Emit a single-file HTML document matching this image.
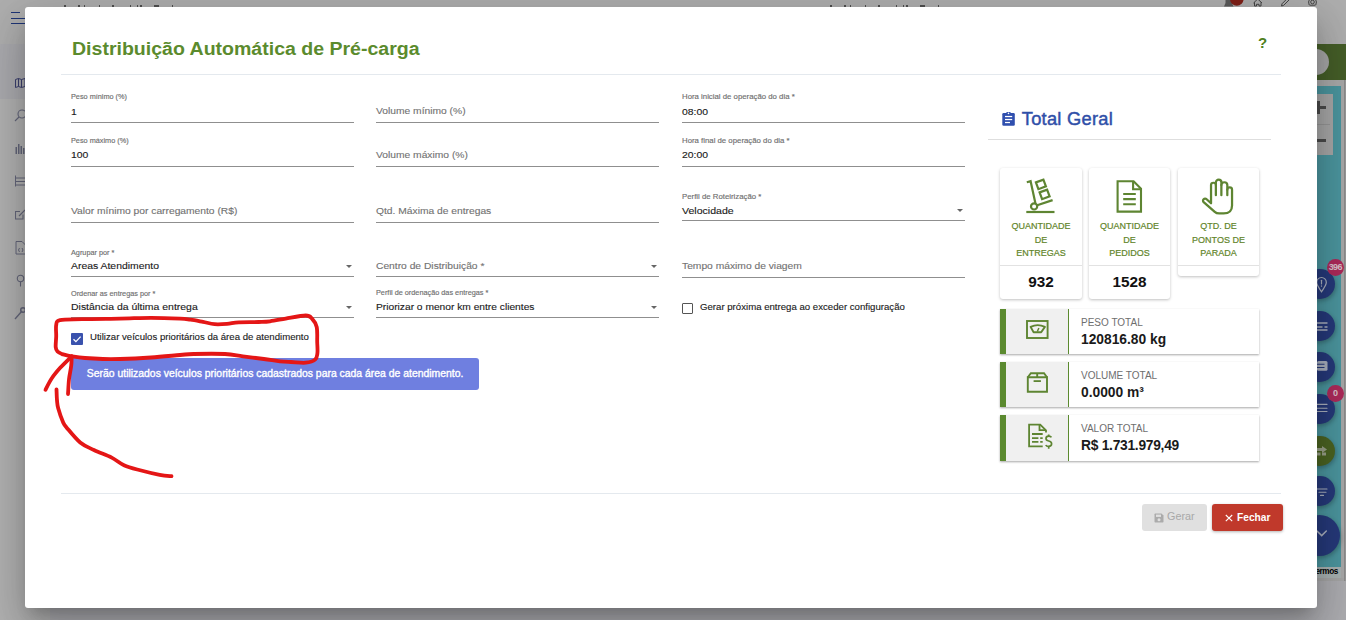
<!DOCTYPE html>
<html><head><meta charset="utf-8"><title>Distribuição Automática de Pré-carga</title>
<style>
html,body{margin:0;padding:0;width:1346px;height:620px;overflow:hidden;background:#a5a5a5;font-family:"Liberation Sans",sans-serif;}
.t{position:absolute;white-space:nowrap;line-height:1;-webkit-font-smoothing:antialiased;}
.r{position:absolute;}
</style></head><body>
<div class="r" style="left:0px;top:0px;width:1346px;height:44px;background:#aeaeae;"></div>
<div class="r" style="left:0px;top:44px;width:50px;height:576px;background:#b1b1b1;"></div>
<div class="r" style="left:0px;top:44px;width:50px;height:55px;background:#aaaaae;"></div>
<div class="r" style="left:50px;top:44px;width:1296px;height:576px;background:#acacb0;"></div>
<div class="r" style="left:11px;top:12px;width:9px;height:1px;background:#1f3577;"></div>
<div class="r" style="left:11px;top:18px;width:15px;height:1px;background:#1f3577;"></div>
<div class="r" style="left:11px;top:23px;width:15px;height:1px;background:#1f3577;"></div>
<div class="r" style="left:1300px;top:44px;width:46px;height:36px;background:#455e28;"></div>
<div class="r" style="left:1302px;top:48.5px;width:26.5px;height:26.5px;border-radius:50%;background:#a6a6a6"></div>
<div class="r" style="left:1300px;top:80px;width:46px;height:6px;background:#a9a9a9;"></div>
<div class="r" style="left:1300px;top:86px;width:41px;height:481px;background:#4b959e;"></div>
<div class="r" style="left:1341px;top:80px;width:5px;height:501.3px;background:#9a9a9a;"></div>
<div class="r" style="left:1341px;top:80px;width:2.7px;height:501.3px;background:#a8a8a8;"></div>
<div class="r" style="left:1343.7px;top:80px;width:1px;height:501.3px;background:#8c8c8c;"></div>
<div class="r" style="left:1300px;top:567px;width:41px;height:11px;background:#a8b1b1;"></div>
<div class="r" style="left:1300px;top:578px;width:43.7px;height:3.3px;background:#a5a5a5;"></div>
<div class="r" style="left:1300px;top:94px;width:33px;height:61px;background:#a6a6a6;"></div>
<div class="r" style="left:1300px;top:124px;width:30px;height:1px;background:#959595;"></div>
<div class="r" style="left:1314px;top:106px;width:12px;height:3px;background:#4a4a4a;"></div>
<div class="r" style="left:1317px;top:101px;width:3px;height:13px;background:#4a4a4a;"></div>
<div class="r" style="left:1314px;top:139px;width:12px;height:3px;background:#4a4a4a;"></div>
<div class="r" style="left:1304.2px;top:269.0px;width:30.4px;height:30.4px;border-radius:50%;background:#26397a;box-shadow:1px 2px 4px rgba(0,0,0,0.25)"></div>
<div class="r" style="left:1304.2px;top:310.8px;width:30.4px;height:30.4px;border-radius:50%;background:#26397a;box-shadow:1px 2px 4px rgba(0,0,0,0.25)"></div>
<div class="r" style="left:1304.2px;top:351.7px;width:30.4px;height:30.4px;border-radius:50%;background:#26397a;box-shadow:1px 2px 4px rgba(0,0,0,0.25)"></div>
<div class="r" style="left:1304.2px;top:393.8px;width:30.4px;height:30.4px;border-radius:50%;background:#26397a;box-shadow:1px 2px 4px rgba(0,0,0,0.25)"></div>
<div class="r" style="left:1304.2px;top:435.6px;width:30.4px;height:30.4px;border-radius:50%;background:#4b6322;box-shadow:1px 2px 4px rgba(0,0,0,0.25)"></div>
<div class="r" style="left:1304.2px;top:475.8px;width:30.4px;height:30.4px;border-radius:50%;background:#26397a;box-shadow:1px 2px 4px rgba(0,0,0,0.25)"></div>
<div class="r" style="left:1298.8000000000002px;top:514.6px;width:41.2px;height:41.2px;border-radius:50%;background:#26397a;box-shadow:1px 2px 4px rgba(0,0,0,0.25)"></div>
<svg class="r" style="left:1300px;top:260px" width="46" height="330" viewBox="1300 260 46 330"><g fill="none" stroke="#a9afbd" stroke-width="1.2" stroke-linecap="round"><path d="M1321.5 277.5A4.8 4.8 0 0 1 1326.3 282.3C1326.3 285.5 1323.5 288.5 1321.5 291.8C1319.5 288.5 1316.7 285.5 1316.7 282.3A4.8 4.8 0 0 1 1321.5 277.5Z"/><path d="M1321.5 280.3V284"/><path d="M1321.5 285.8V286.2"/><path d="M1317 323H1327M1317 327H1322M1325 327H1327M1317 330H1327" stroke-width="1.4"/><path d="M1327 404.4H1317M1327 408.2H1317M1327 411.5H1317" stroke-width="1.1"/><path d="M1317 489H1327M1319 492.2H1326M1320.5 495.4H1323.5" stroke-width="1.1"/><path d="M1317 531L1321.7 535.6L1326.3 531" stroke-width="1.5"/></g><rect x="1317" y="361" width="10.5" height="9.8" rx="1.5" fill="#a9afbd"/><path d="M1317 364.3H1324.5M1317 367.5H1324.5" stroke="#26397a" stroke-width="1.1"/><g fill="#9aa08a"><rect x="1317" y="448" width="6" height="3"/><path d="M1322 446L1327 449.5L1322 453Z"/><rect x="1317" y="452.5" width="3.5" height="3"/><rect x="1322" y="452.5" width="4" height="3"/></g></svg>
<div class="r" style="left:1326.8999999999999px;top:258.8px;width:16.8px;height:16.8px;border-radius:50%;background:#ad2a5a;color:#d9c3cb;font:bold 9px/17px 'Liberation Sans',sans-serif;text-align:center;letter-spacing:-0.6px">396</div>
<div class="r" style="left:1326.8999999999999px;top:385.0px;width:16.8px;height:16.8px;border-radius:50%;background:#ad2a5a;color:#d9c3cb;font:bold 9px/17px 'Liberation Sans',sans-serif;text-align:center;letter-spacing:-0.6px">0</div>
<div class="t" style="left:1315.50px;top:568.06px;font-size:8.2px;color:#000;font-weight:700;letter-spacing:-0.45px;">ermos</div>
<svg class="r" style="left:1220px;top:0" width="100" height="8" viewBox="1220 0 100 8"><path d="M1224 6.5H1233.5L1232 3V-2H1225.5V3Z" fill="#5a5a5a"/><circle cx="1236.8" cy="-1" r="6.8" fill="#7f2018"/><g fill="none" stroke="#444" stroke-width="1"><path d="M1253.5 3L1257.7 -1L1262 3M1254.5 2.3V6H1256.5V4.3H1259V6H1261V2.3"/><path d="M1281.5 6L1282 3.8L1288 -2.2L1289.6 -0.6L1283.6 5.4Z"/><circle cx="1312.5" cy="2" r="1.8"/><path d="M1309.2 5L1308.6 2L1309.5 -0.8M1315.8 5L1316.4 2L1315.5 -0.8M1309.5 5.2H1315.5"/></g></svg>
<div class="r" style="left:63.7px;top:5px;width:2px;height:2px;background:#505050;"></div>
<div class="r" style="left:78px;top:5px;width:1.5px;height:2px;background:#505050;"></div>
<div class="r" style="left:83.8px;top:5px;width:1.4px;height:2px;background:#505050;"></div>
<div class="r" style="left:98.5px;top:5px;width:1px;height:2px;background:#505050;"></div>
<div class="r" style="left:112px;top:5px;width:2px;height:2px;background:#505050;"></div>
<div class="r" style="left:129.7px;top:5px;width:1.5px;height:2px;background:#505050;"></div>
<div class="r" style="left:137.1px;top:5px;width:1px;height:2px;background:#505050;"></div>
<div class="r" style="left:140.2px;top:5px;width:1.6px;height:2px;background:#505050;"></div>
<div class="r" style="left:153.5px;top:5px;width:5px;height:2px;background:#505050;"></div>
<div class="r" style="left:171.5px;top:5px;width:1px;height:2px;background:#505050;"></div>
<div class="r" style="left:829.7px;top:5px;width:2px;height:2px;background:#505050;"></div>
<div class="r" style="left:844px;top:5px;width:1.5px;height:2px;background:#505050;"></div>
<div class="r" style="left:849.8px;top:5px;width:1.4px;height:2px;background:#505050;"></div>
<div class="r" style="left:864.5px;top:5px;width:1px;height:2px;background:#505050;"></div>
<div class="r" style="left:878px;top:5px;width:2px;height:2px;background:#505050;"></div>
<div class="r" style="left:895.6px;top:5px;width:1.5px;height:2px;background:#505050;"></div>
<div class="r" style="left:903.1px;top:5px;width:1px;height:2px;background:#505050;"></div>
<div class="r" style="left:906.2px;top:5px;width:1.6px;height:2px;background:#505050;"></div>
<div class="r" style="left:919.5px;top:5px;width:5px;height:2px;background:#505050;"></div>
<div class="r" style="left:937.5px;top:5px;width:1px;height:2px;background:#505050;"></div>
<svg class="r" style="left:15px;top:78px" width="11" height="10" viewBox="0 0 11 10"><g fill="none" stroke="#3b3f6e" stroke-width="1"><path d="M0.5 1.5L3.5 0.5L6.5 1.5L10 0.5V8.5L6.5 9.5L3.5 8.5L0.5 9.5Z M3.5 0.5V8.5M6.5 1.5V9.5"/></g></svg>
<svg class="r" style="left:14px;top:109px" width="12" height="13" viewBox="0 0 12 13"><g fill="none" stroke="#64667a" stroke-width="1.1"><circle cx="8" cy="5" r="4"/><path d="M5 8L1 12"/></g></svg>
<svg class="r" style="left:15px;top:142px" width="11" height="13" viewBox="0 0 11 13"><g fill="#64667a"><rect x="0.5" y="5" width="1.5" height="7"/><rect x="3" y="2" width="1.5" height="10"/><rect x="5.5" y="4" width="1.5" height="8"/><rect x="8" y="6" width="1.5" height="6"/></g></svg>
<svg class="r" style="left:15px;top:175px" width="11" height="12" viewBox="0 0 11 12"><g fill="none" stroke="#64667a" stroke-width="1"><path d="M0.5 0.5V11.5M0.5 3H10.5M0.5 6.5H10.5M0.5 10H10.5"/></g></svg>
<svg class="r" style="left:15px;top:208px" width="11" height="12" viewBox="0 0 11 12"><g fill="none" stroke="#64667a" stroke-width="1.1"><path d="M8 6.5V11H0.5V3.5H5"/><path d="M4 8L10 2"/></g></svg>
<svg class="r" style="left:15px;top:241px" width="11" height="14" viewBox="0 0 11 14"><g fill="none" stroke="#64667a" stroke-width="1"><path d="M1 0.5H7L10.5 4V13H1Z"/><path d="M4.5 7L3.5 9L4.5 11M7 7L8 9L7 11"/></g></svg>
<svg class="r" style="left:15px;top:274px" width="11" height="13" viewBox="0 0 11 13"><g fill="none" stroke="#64667a" stroke-width="1.1"><circle cx="5.5" cy="4.5" r="3.2"/><path d="M5.5 7.7V12.5"/></g></svg>
<svg class="r" style="left:14px;top:306px" width="12" height="14" viewBox="0 0 12 14"><g fill="none" stroke="#64667a" stroke-width="1.4"><path d="M1 13L8 5"/><circle cx="9" cy="4" r="2.3"/></g></svg>
<div class="r" style="left:25px;top:7px;width:1292px;height:601px;background:#fff;border-radius:3px;box-shadow:0 11px 15px -7px rgba(0,0,0,.2),0 24px 38px 3px rgba(0,0,0,.14),0 9px 46px 8px rgba(0,0,0,.12)"></div>
<div class="t" style="left:72.00px;top:39.51px;font-size:18.3px;color:#5b8b2d;font-weight:700;transform:scaleX(1.068);transform-origin:0 0;">Distribuição Automática de Pré-carga</div>
<div class="t" style="left:1258.00px;top:35.30px;font-size:15px;color:#4f7f20;font-weight:700;">?</div>
<div class="r" style="left:61px;top:74px;width:1220px;height:1px;background:#e4e9ee;"></div>
<div class="r" style="left:61px;top:493px;width:1220px;height:1px;background:#e4e9ee;"></div>
<div class="t" style="left:71.00px;top:93.32px;font-size:7.3px;color:#6f6f6f;-webkit-text-stroke:0.15px #6f6f6f;">Peso mínimo (%)</div>
<div class="t" style="left:71.00px;top:106.67px;font-size:9.6px;color:#1a1a1a;transform:scaleX(1.085);transform-origin:0 0;-webkit-text-stroke:0.12px currentColor;">1</div>
<div class="r" style="left:71px;top:122px;width:283px;height:1px;background:#8f8f8f;"></div>
<div class="t" style="left:71.00px;top:137.32px;font-size:7.3px;color:#6f6f6f;-webkit-text-stroke:0.15px #6f6f6f;">Peso máximo (%)</div>
<div class="t" style="left:71.00px;top:149.77px;font-size:9.6px;color:#1a1a1a;transform:scaleX(1.085);transform-origin:0 0;-webkit-text-stroke:0.12px currentColor;">100</div>
<div class="r" style="left:71px;top:166px;width:283px;height:1px;background:#8f8f8f;"></div>
<div class="t" style="left:71.00px;top:205.77px;font-size:9.6px;color:#727272;transform:scaleX(1.07);transform-origin:0 0;-webkit-text-stroke:0.12px currentColor;">Valor mínimo por carregamento (R$)</div>
<div class="r" style="left:71px;top:222px;width:283px;height:1px;background:#8f8f8f;"></div>
<div class="t" style="left:71.00px;top:248.52px;font-size:7.3px;color:#6f6f6f;-webkit-text-stroke:0.15px #6f6f6f;">Agrupar por *</div>
<div class="t" style="left:71.00px;top:260.67px;font-size:9.6px;color:#1a1a1a;transform:scaleX(1.085);transform-origin:0 0;-webkit-text-stroke:0.12px currentColor;">Areas Atendimento</div>
<div class="r" style="left:71px;top:276px;width:283px;height:1px;background:#8f8f8f;"></div>
<div class="r" style="left:345.5px;top:265px;width:0;height:0;border-left:3px solid transparent;border-right:3px solid transparent;border-top:3px solid #666"></div>
<div class="t" style="left:71.00px;top:289.62px;font-size:7.3px;color:#6f6f6f;-webkit-text-stroke:0.15px #6f6f6f;">Ordenar as entregas por *</div>
<div class="t" style="left:71.00px;top:301.87px;font-size:9.6px;color:#1a1a1a;transform:scaleX(1.09);transform-origin:0 0;-webkit-text-stroke:0.12px currentColor;">Distância da última entrega</div>
<div class="r" style="left:71px;top:317px;width:283px;height:1px;background:#8f8f8f;"></div>
<div class="r" style="left:345.5px;top:306px;width:0;height:0;border-left:3px solid transparent;border-right:3px solid transparent;border-top:3px solid #666"></div>
<div class="r" style="left:71px;top:333px;width:12px;height:12px;background:#3a52ad;border-radius:1px"></div>
<svg class="r" style="left:71px;top:333px" width="12" height="12" viewBox="0 0 12 12"><path d="M2.5 6.2 L4.9 8.6 L9.6 3.6" fill="none" stroke="#fff" stroke-width="1.3"/></svg>
<div class="t" style="left:89.60px;top:333.03px;font-size:9.3px;color:#1a1a1a;transform:scaleX(1.033);transform-origin:0 0;-webkit-text-stroke:0.12px currentColor;">Utilizar veículos prioritários da área de atendimento</div>
<div class="r" style="left:71px;top:358px;width:408px;height:32px;background:#6f7fe0;border-radius:3px"></div>
<div class="t" style="left:86.80px;top:369.08px;font-size:10.42px;color:#fff;-webkit-text-stroke:0.35px #fff;">Serão utilizados veículos prioritários cadastrados para cada área de atendimento.</div>
<div class="t" style="left:376.00px;top:105.57px;font-size:9.6px;color:#727272;transform:scaleX(1.07);transform-origin:0 0;-webkit-text-stroke:0.12px currentColor;">Volume mínimo (%)</div>
<div class="r" style="left:376px;top:122px;width:283px;height:1px;background:#8f8f8f;"></div>
<div class="t" style="left:376.00px;top:149.77px;font-size:9.6px;color:#727272;transform:scaleX(1.07);transform-origin:0 0;-webkit-text-stroke:0.12px currentColor;">Volume máximo (%)</div>
<div class="r" style="left:376px;top:166px;width:283px;height:1px;background:#8f8f8f;"></div>
<div class="t" style="left:376.00px;top:205.77px;font-size:9.6px;color:#727272;transform:scaleX(1.07);transform-origin:0 0;-webkit-text-stroke:0.12px currentColor;">Qtd. Máxima de entregas</div>
<div class="r" style="left:376px;top:222px;width:283px;height:1px;background:#8f8f8f;"></div>
<div class="t" style="left:376.00px;top:260.87px;font-size:9.6px;color:#727272;transform:scaleX(1.07);transform-origin:0 0;-webkit-text-stroke:0.12px currentColor;">Centro de Distribuição *</div>
<div class="r" style="left:376px;top:276px;width:283px;height:1px;background:#8f8f8f;"></div>
<div class="r" style="left:650.5px;top:265px;width:0;height:0;border-left:3px solid transparent;border-right:3px solid transparent;border-top:3px solid #666"></div>
<div class="t" style="left:376.00px;top:289.22px;font-size:7.3px;color:#6f6f6f;-webkit-text-stroke:0.15px #6f6f6f;">Perfil de ordenação das entregas *</div>
<div class="t" style="left:376.00px;top:301.77px;font-size:9.6px;color:#1a1a1a;transform:scaleX(1.065);transform-origin:0 0;-webkit-text-stroke:0.12px currentColor;">Priorizar o menor km entre clientes</div>
<div class="r" style="left:376px;top:317px;width:283px;height:1px;background:#8f8f8f;"></div>
<div class="r" style="left:650.5px;top:306px;width:0;height:0;border-left:3px solid transparent;border-right:3px solid transparent;border-top:3px solid #666"></div>
<div class="t" style="left:682.00px;top:92.80px;font-size:7.8px;color:#6f6f6f;-webkit-text-stroke:0.15px #6f6f6f;">Hora inicial de operação do dia *</div>
<div class="t" style="left:682.00px;top:106.67px;font-size:9.6px;color:#1a1a1a;transform:scaleX(1.085);transform-origin:0 0;-webkit-text-stroke:0.12px currentColor;">08:00</div>
<div class="r" style="left:682px;top:122px;width:283px;height:1px;background:#8f8f8f;"></div>
<div class="t" style="left:682.00px;top:136.80px;font-size:7.8px;color:#6f6f6f;-webkit-text-stroke:0.15px #6f6f6f;">Hora final de operação do dia *</div>
<div class="t" style="left:682.00px;top:149.77px;font-size:9.6px;color:#1a1a1a;transform:scaleX(1.085);transform-origin:0 0;-webkit-text-stroke:0.12px currentColor;">20:00</div>
<div class="r" style="left:682px;top:166px;width:283px;height:1px;background:#8f8f8f;"></div>
<div class="t" style="left:682.00px;top:192.60px;font-size:7.8px;color:#6f6f6f;-webkit-text-stroke:0.15px #6f6f6f;">Perfil de Roteirização *</div>
<div class="t" style="left:682.00px;top:205.67px;font-size:9.6px;color:#1a1a1a;transform:scaleX(1.1);transform-origin:0 0;-webkit-text-stroke:0.12px currentColor;">Velocidade</div>
<div class="r" style="left:682px;top:220px;width:283px;height:1px;background:#8f8f8f;"></div>
<div class="r" style="left:956.5px;top:209px;width:0;height:0;border-left:3px solid transparent;border-right:3px solid transparent;border-top:3px solid #666"></div>
<div class="t" style="left:682.00px;top:260.77px;font-size:9.6px;color:#727272;transform:scaleX(1.07);transform-origin:0 0;-webkit-text-stroke:0.12px currentColor;">Tempo máximo de viagem</div>
<div class="r" style="left:682px;top:277px;width:283px;height:1px;background:#8f8f8f;"></div>
<div class="r" style="left:682px;top:303px;width:9px;height:9px;border:1.3px solid #555;border-radius:1px"></div>
<div class="t" style="left:700.40px;top:303.03px;font-size:9.3px;color:#1a1a1a;transform:scaleX(1.035);transform-origin:0 0;-webkit-text-stroke:0.12px currentColor;">Gerar próxima entrega ao exceder configuração</div>
<div class="t" style="left:1021.80px;top:109.91px;font-size:18.3px;color:#2f4fa8;-webkit-text-stroke:0.45px #2f4fa8;letter-spacing:0.25px;">Total Geral</div>
<div class="r" style="left:988px;top:139px;width:283px;height:1px;background:#dedede;"></div>
<div class="r" style="left:1000px;top:168px;width:82px;height:131px;background:#fff;border-radius:3px;box-shadow:0 1px 3px rgba(0,0,0,0.25)"></div>
<div class="r" style="left:1000px;top:265px;width:82px;height:1px;background:#e2e2e2;"></div>
<div class="t" style="left:1000.00px;width:82px;text-align:center;top:222.38px;font-size:9px;color:#62852a;-webkit-text-stroke:0.2px #62852a;">QUANTIDADE</div>
<div class="t" style="left:1000.00px;width:82px;text-align:center;top:235.68px;font-size:9px;color:#62852a;-webkit-text-stroke:0.2px #62852a;">DE</div>
<div class="t" style="left:1000.00px;width:82px;text-align:center;top:248.98px;font-size:9px;color:#62852a;-webkit-text-stroke:0.2px #62852a;">ENTREGAS</div>
<div class="t" style="left:1000.00px;width:82px;text-align:center;top:274.25px;font-size:15.3px;color:#111;font-weight:700;">932</div>
<div class="r" style="left:1089px;top:168px;width:81px;height:131px;background:#fff;border-radius:3px;box-shadow:0 1px 3px rgba(0,0,0,0.25)"></div>
<div class="r" style="left:1089px;top:265px;width:81px;height:1px;background:#e2e2e2;"></div>
<div class="t" style="left:1089.00px;width:81px;text-align:center;top:222.38px;font-size:9px;color:#62852a;-webkit-text-stroke:0.2px #62852a;">QUANTIDADE</div>
<div class="t" style="left:1089.00px;width:81px;text-align:center;top:235.68px;font-size:9px;color:#62852a;-webkit-text-stroke:0.2px #62852a;">DE</div>
<div class="t" style="left:1089.00px;width:81px;text-align:center;top:248.98px;font-size:9px;color:#62852a;-webkit-text-stroke:0.2px #62852a;">PEDIDOS</div>
<div class="t" style="left:1089.00px;width:81px;text-align:center;top:274.25px;font-size:15.3px;color:#111;font-weight:700;">1528</div>
<div class="r" style="left:1178px;top:168px;width:81px;height:108px;background:#fff;border-radius:3px;box-shadow:0 1px 3px rgba(0,0,0,0.25)"></div>
<div class="r" style="left:1178px;top:265px;width:81px;height:1px;background:#e2e2e2;"></div>
<div class="t" style="left:1178.00px;width:81px;text-align:center;top:222.38px;font-size:9px;color:#62852a;-webkit-text-stroke:0.2px #62852a;">QTD. DE</div>
<div class="t" style="left:1178.00px;width:81px;text-align:center;top:235.68px;font-size:9px;color:#62852a;-webkit-text-stroke:0.2px #62852a;">PONTOS DE</div>
<div class="t" style="left:1178.00px;width:81px;text-align:center;top:248.98px;font-size:9px;color:#62852a;-webkit-text-stroke:0.2px #62852a;">PARADA</div>
<div class="r" style="left:1000px;top:309px;width:259px;height:45px;background:#fff;box-shadow:0 1px 2px rgba(0,0,0,0.35)"></div>
<div class="r" style="left:1000px;top:309px;width:6px;height:45px;background:#5b8a2f;"></div>
<div class="r" style="left:1006px;top:309px;width:62px;height:45px;background:#f0f0f0;"></div>
<div class="r" style="left:1068px;top:309px;width:1px;height:45px;background:#5b8a2f;"></div>
<div class="t" style="left:1081.00px;top:317.54px;font-size:10px;color:#6e6e6e;">PESO TOTAL</div>
<div class="t" style="left:1081.00px;top:332.82px;font-size:13.8px;color:#1a1a1a;font-weight:700;">120816.80 kg</div>
<div class="r" style="left:1000px;top:362px;width:259px;height:45px;background:#fff;box-shadow:0 1px 2px rgba(0,0,0,0.35)"></div>
<div class="r" style="left:1000px;top:362px;width:6px;height:45px;background:#5b8a2f;"></div>
<div class="r" style="left:1006px;top:362px;width:62px;height:45px;background:#f0f0f0;"></div>
<div class="r" style="left:1068px;top:362px;width:1px;height:45px;background:#5b8a2f;"></div>
<div class="t" style="left:1081.00px;top:370.54px;font-size:10px;color:#6e6e6e;">VOLUME TOTAL</div>
<div class="t" style="left:1081.00px;top:385.82px;font-size:13.8px;color:#1a1a1a;font-weight:700;">0.0000 m³</div>
<div class="r" style="left:1000px;top:415px;width:259px;height:46px;background:#fff;box-shadow:0 1px 2px rgba(0,0,0,0.35)"></div>
<div class="r" style="left:1000px;top:415px;width:6px;height:46px;background:#5b8a2f;"></div>
<div class="r" style="left:1006px;top:415px;width:62px;height:46px;background:#f0f0f0;"></div>
<div class="r" style="left:1068px;top:415px;width:1px;height:46px;background:#5b8a2f;"></div>
<div class="t" style="left:1081.00px;top:423.54px;font-size:10px;color:#6e6e6e;">VALOR TOTAL</div>
<div class="t" style="left:1081.00px;top:438.82px;font-size:13.8px;color:#1a1a1a;font-weight:700;letter-spacing:-0.27px;">R$ 1.731.979,49</div>
<div class="r" style="left:1142px;top:504px;width:65px;height:27px;background:#e0e0e0;border-radius:3px"></div>
<svg class="r" style="left:1154px;top:513px" width="10" height="10" viewBox="0 0 10 10"><path d="M0.5 1.3Q0.5 0.5 1.3 0.5H7.5L9.5 2.5V8.7Q9.5 9.5 8.7 9.5H1.3Q0.5 9.5 0.5 8.7Z" fill="#ababab"/><rect x="2" y="1.6" width="5" height="2.3" fill="#e0e0e0"/><circle cx="5" cy="6.7" r="1.5" fill="#e0e0e0"/></svg>
<div class="t" style="left:1167.00px;top:511.36px;font-size:10.8px;color:#a8a8a8;">Gerar</div>
<div class="r" style="left:1212px;top:504px;width:71px;height:27px;background:#c0392b;border-radius:3px;box-shadow:0 1px 3px rgba(0,0,0,0.3)"></div>
<svg class="r" style="left:1225px;top:514px" width="8" height="8" viewBox="0 0 8 8"><path d="M0.8 1L7.2 7.2M7.2 1L0.8 7.2" stroke="#fff" stroke-width="1.1"/></svg>
<div class="t" style="left:1237.00px;top:512.57px;font-size:10.2px;color:#fff;font-weight:700;">Fechar</div>
<svg class="r" style="left:1020px;top:172px" width="42" height="46" viewBox="0 0 42 46"><g fill="none" stroke="#5e8532" stroke-width="2.2" stroke-linejoin="miter"><path d="M6.3 40H34.5"/><circle cx="14.1" cy="34.4" r="3.1"/><path d="M6.8 10.2L10.6 9.2L15.4 31.3"/><path d="M17.2 33.3L32.6 28.1"/><path d="M15.9 10.4L23.4 7.6L25.9 14.4L18.4 17.2Z"/><path d="M19.6 20.4L27.1 17.6L29.6 24.4L22.1 27.2Z"/></g></svg>
<svg class="r" style="left:1108px;top:172px" width="42" height="46" viewBox="0 0 42 46"><g fill="none" stroke="#5e8532" stroke-width="2.1"><path d="M9.6 9.3H25.6L33 16.7V39.6H9.6Z"/><path d="M25.1 9.3V17.2H33"/><path d="M15.2 22H27.8M15.2 27.1H27.8M15.2 32.3H27.8"/></g></svg>
<svg class="r" style="left:1196px;top:172px" width="44" height="48" viewBox="0 0 44 48"><g fill="none" stroke="#5e8532" stroke-width="2.05" stroke-linejoin="round" stroke-linecap="round" transform="translate(21.3 24.45) scale(1.1 1.055) translate(-21.3 -24)"><path d="M15.6 30.5V13.2A2.2 2.2 0 0 1 20 13.2V10.6A2.5 2.5 0 0 1 25 10.6V13.2A2.7 2.7 0 0 1 30.4 13.2V17.6A2.15 2.15 0 0 1 34.7 17.6V32.5Q34.7 40.1 27 40.1H23Q20.6 40.1 19 38.6L8.9 29.4A1.9 1.9 0 0 1 11.6 26.6L15.6 30.5"/><path d="M20 13.2V22.8M25 13.2V22.8M30.4 17.6V22.8"/></g></svg>
<svg class="r" style="left:1020px;top:312px" width="36" height="34" viewBox="0 0 36 34"><g fill="none" stroke="#5e8532" stroke-width="1.9"><rect x="7" y="9" width="20.6" height="17"/><path d="M10.6 14.9Q17.7 11.3 24.9 14.9L21.2 20.2H13.6Z" stroke-linejoin="round"/><path d="M17.3 19.5L18.9 16" stroke-width="1.5"/></g></svg>
<svg class="r" style="left:1020px;top:365px" width="36" height="35" viewBox="0 0 36 35"><g fill="none" stroke="#5e8532" stroke-width="1.9"><path d="M7.8 12.3H27V26.7H7.8Z"/><path d="M7.8 12.3L10.9 8.2H24L27 12.3"/><path d="M17.2 8.2V12.3"/><path d="M13.6 16.1H20.9" stroke-width="1.8"/></g></svg>
<svg class="r" style="left:1020px;top:418px" width="38" height="38" viewBox="0 0 38 38"><g fill="none" stroke="#5e8532" stroke-width="1.8"><path d="M22.7 28.3H9.1V6.6H20.2L26 12.3V14.4"/><path d="M19.5 6.6V12.1H26"/><path d="M12 16H22.7M12 20.2H18.4M20.2 20.2H22.7M12 23.9H18.4M20.2 23.9H22.7"/><path d="M31.4 19.4Q30.8 18.2 28.7 18.2Q26 18.2 26 20.6Q26 22.6 28.7 23Q31.6 23.5 31.6 25.8Q31.6 28.4 28.7 28.4Q26.4 28.4 25.8 27" stroke-width="1.7"/><path d="M28.7 16.6V18.2M28.7 28.4V30.8" stroke-width="1.7"/></g></svg>
<svg class="r" style="left:1002px;top:111px" width="13" height="15" viewBox="0 0 13 15"><rect x="0.3" y="2" width="12.5" height="12.7" rx="1.3" fill="#2f4fae"/><rect x="4.2" y="0.9" width="4.6" height="2.6" rx="1.1" fill="#2f4fae"/><circle cx="6.5" cy="2.4" r="0.8" fill="#fff"/><rect x="3" y="4.9" width="7.2" height="1.25" fill="#fff"/><rect x="3" y="7.9" width="7.2" height="1.25" fill="#fff"/><rect x="3" y="10.9" width="5" height="1.25" fill="#fff"/></svg>
<svg class="r" style="left:0;top:0" width="1346" height="620" viewBox="0 0 1346 620"><g fill="none" stroke="#e41616" stroke-width="3.8" stroke-linecap="round" stroke-linejoin="round"><path d="M62.3 354.2 C61.5 353.8 58.6 352.7 57.5 351.5 C56.4 350.3 55.9 349.5 55.7 347.0 C55.5 344.5 56.1 340.1 56.2 336.4 C56.3 332.7 55.6 327.7 56.2 325.0 C56.8 322.3 55.7 321.2 60.0 320.2 C64.3 319.2 72.0 319.5 82.0 319.2 C92.0 318.9 108.5 318.8 120.0 318.6 C131.5 318.4 141.0 317.8 151.0 317.8 C161.0 317.8 173.4 318.3 180.0 318.6 C186.6 318.9 186.7 319.2 190.5 319.7 C194.3 320.2 199.0 321.1 203.0 321.8 C207.0 322.6 210.6 323.9 214.6 324.2 C218.6 324.5 223.0 324.2 227.0 323.9 C231.0 323.6 233.4 322.6 238.7 322.3 C244.0 322.0 253.4 322.2 258.6 322.0 C263.8 321.8 265.5 321.9 270.0 321.3 C274.5 320.7 279.8 319.6 285.7 318.6 C291.6 317.6 301.3 315.5 305.7 315.5 C310.1 315.5 310.2 316.7 312.0 318.6 C313.8 320.5 315.8 323.1 316.7 327.0 C317.6 330.9 317.1 337.3 317.2 341.7 C317.3 346.1 317.8 350.3 317.4 353.3 C317.0 356.3 317.1 358.0 315.1 359.6 C313.2 361.2 309.7 362.3 305.7 362.7 C301.7 363.1 295.3 362.2 291.0 362.0 C286.7 361.8 284.5 361.8 280.0 361.3 C275.5 360.8 270.1 359.8 263.9 359.0 C257.7 358.2 249.4 357.2 242.9 356.4 C236.4 355.6 233.2 354.4 225.0 354.0 C216.8 353.6 201.1 353.8 193.6 354.0 C186.1 354.2 187.1 354.4 180.0 355.0 C172.9 355.6 161.0 356.8 151.0 357.5 C141.0 358.2 128.0 358.8 120.0 359.0 C112.0 359.2 108.7 359.2 102.9 359.0 C97.1 358.8 90.2 358.4 85.0 358.0 C79.8 357.6 75.5 356.9 71.7 356.3 C67.9 355.7 63.9 354.6 62.3 354.2"/><path d="M45.5 389.8 C46.5 387.9 49.3 382.0 51.8 378.3 C54.2 374.6 56.9 371.5 60.2 367.8 C63.5 364.1 69.8 358.2 71.7 356.3"/><path d="M71.7 356.3 C71.6 357.9 71.7 361.9 71.2 365.7 C70.8 369.5 69.5 374.7 69.0 379.4 C68.5 384.1 68.2 391.6 68.0 394.0"/><path d="M56.5 389.3 C56.6 391.1 56.7 397.2 57.0 400.3 C57.3 403.4 57.2 404.6 58.2 408.2 C59.2 411.8 61.6 418.7 63.0 421.9 C64.4 425.1 63.6 424.0 66.5 427.4 C69.4 430.8 75.6 438.7 80.2 442.5 C84.8 446.3 88.7 447.5 93.9 450.0 C99.2 452.5 106.7 455.1 111.7 457.6 C116.7 460.1 119.4 463.1 124.0 465.2 C128.6 467.3 133.2 468.4 139.2 470.0 C145.1 471.6 154.3 473.8 159.7 474.8 C165.1 475.8 169.5 476.0 171.5 476.2"/></g></svg>
</body></html>
